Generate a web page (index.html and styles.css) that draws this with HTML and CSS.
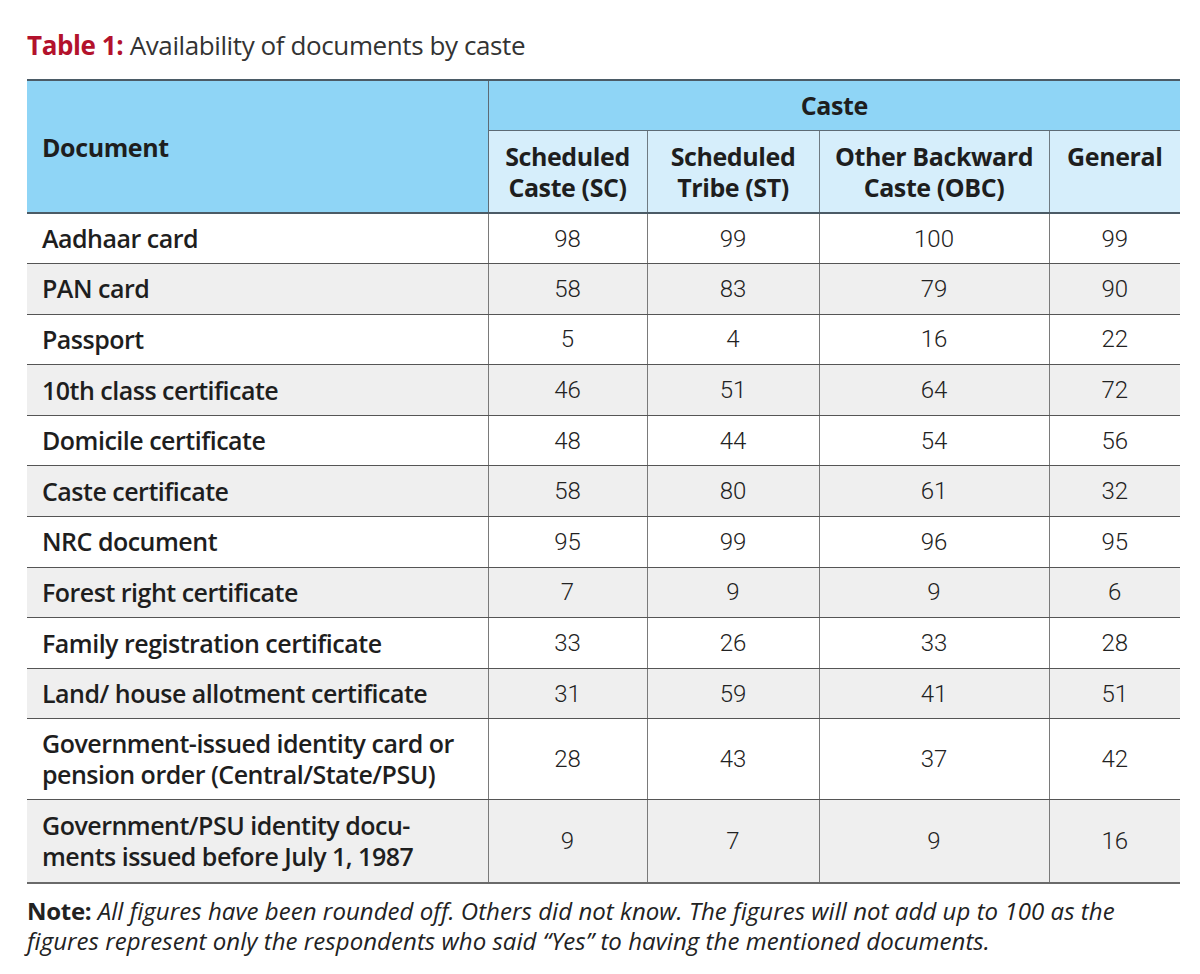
FILE: index.html
```html
<!DOCTYPE html>
<html lang="en">
<head>
<meta charset="utf-8">
<title>Table 1: Availability of documents by caste</title>
<link rel="stylesheet" href="styles.css">
</head>
<body>
<div class="page">
  <h1 class="title"><span class="title-label">Table 1:</span> Availability of documents by caste</h1>
  <table class="data">
    <colgroup>
      <col class="c-doc">
      <col class="c-sc">
      <col class="c-st">
      <col class="c-obc">
      <col class="c-gen">
    </colgroup>
    <thead>
      <tr class="h1">
        <th rowspan="2" class="doc-head">Document</th>
        <th colspan="4" class="group-head">Caste</th>
      </tr>
      <tr class="h2">
        <th>Scheduled<br>Caste (SC)</th>
        <th>Scheduled<br>Tribe (ST)</th>
        <th>Other Backward<br>Caste (OBC)</th>
        <th>General</th>
      </tr>
    </thead>
    <tbody>
      <tr><td class="lbl">Aadhaar card</td><td>98</td><td>99</td><td>100</td><td>99</td></tr>
      <tr><td class="lbl">PAN card</td><td>58</td><td>83</td><td>79</td><td>90</td></tr>
      <tr><td class="lbl">Passport</td><td>5</td><td>4</td><td>16</td><td>22</td></tr>
      <tr><td class="lbl">10th class certificate</td><td>46</td><td>51</td><td>64</td><td>72</td></tr>
      <tr><td class="lbl">Domicile certificate</td><td>48</td><td>44</td><td>54</td><td>56</td></tr>
      <tr><td class="lbl">Caste certificate</td><td>58</td><td>80</td><td>61</td><td>32</td></tr>
      <tr><td class="lbl">NRC document</td><td>95</td><td>99</td><td>96</td><td>95</td></tr>
      <tr><td class="lbl">Forest right certificate</td><td>7</td><td>9</td><td>9</td><td>6</td></tr>
      <tr><td class="lbl">Family registration certificate</td><td>33</td><td>26</td><td>33</td><td>28</td></tr>
      <tr><td class="lbl">Land/ house allotment certificate</td><td>31</td><td>59</td><td>41</td><td>51</td></tr>
      <tr class="tall"><td class="lbl">Government-issued identity card or<br>pension order (Central/State/PSU)</td><td>28</td><td>43</td><td>37</td><td>42</td></tr>
      <tr class="tall"><td class="lbl">Government/PSU identity docu-<br>ments issued before July 1, 1987</td><td>9</td><td>7</td><td>9</td><td>16</td></tr>
    </tbody>
  </table>
  <p class="note"><strong>Note:</strong> <em>All figures have been rounded off. Others did not know. The figures will not add up to 100 as the<br>figures represent only the respondents who said “Yes” to having the mentioned documents.</em></p>
</div>
</body>
</html>
```
FILE: styles.css
```css
html, body {
  margin: 0;
  padding: 0;
  background: #ffffff;
}

body {
  font-family: "Open Sans", "Noto Sans", "Liberation Sans", sans-serif;
  color: #222222;
}

.page {
  padding: 28px 10px 0 27px;
}

.title {
  margin: 0 0 17px 0;
  font-size: 26px;
  line-height: 34px;
  font-weight: 400;
  color: #333333;
  letter-spacing: -0.4px;
}

.title-label {
  color: #b3122c;
  font-weight: 700;
}

.data {
  width: 1153px;
  border-collapse: collapse;
  table-layout: fixed;
}

.c-doc { width: 461px; }
.c-sc { width: 159px; }
.c-st { width: 172px; }
.c-obc { width: 230px; }
.c-gen { width: 131px; }

.data th {
  font-weight: 700;
  font-size: 25px;
  letter-spacing: -0.4px;
  color: #1e1e1e;
  box-sizing: border-box;
}

.h1 th {
  background: #8fd5f6;
  border-top: 2px solid #4b5b66;
  height: 50px;
  padding: 0;
}

.doc-head {
  text-align: left;
  padding-left: 15px !important;
  border-right: 1px solid #5d6b75;
  border-bottom: 2px solid #4b5b66;
  vertical-align: middle;
}

.group-head {
  text-align: center;
  border-bottom: 1px solid #5d6b75;
}

.h2 th {
  background: #d6eefb;
  height: 83px;
  vertical-align: top;
  padding: 10px 0 0 0;
  line-height: 31px;
  text-align: center;
  border-right: 1px solid #6f7a82;
  border-bottom: 2px solid #4b5b66;
}

.h2 th:last-child {
  border-right: none;
}

.data td {
  box-sizing: border-box;
  height: 50.6px;
  padding: 0;
  text-align: center;
  vertical-align: middle;
  font-family: "Roboto", "Liberation Sans", sans-serif;
  font-weight: 300;
  font-size: 24px;
  color: #222222;
  border-bottom: 1px solid #555555;
  border-right: 1px solid #7a7a7a;
}

.data td:last-child {
  border-right: none;
}

.data td.lbl {
  text-align: left;
  padding-left: 15px;
  font-family: "Open Sans", "Noto Sans", "Liberation Sans", sans-serif;
  font-weight: 600;
  font-size: 25px;
  letter-spacing: -0.5px;
  line-height: 31px;
  color: #1e1e1e;
}

.data tbody tr:nth-child(even) td {
  background: #efefef;
}

.data tr.tall td {
  height: 81px;
}

.data tbody tr:last-child td {
  height: 83px;
  border-bottom: 2px solid #6a6a6a;
}

.note {
  margin: 12px 0 0 0;
  font-size: 24px;
  line-height: 30px;
  color: #222222;
  letter-spacing: 0.05px;
  white-space: nowrap;
}

.note strong {
  font-weight: 700;
  letter-spacing: -0.3px;
}

.note em {
  font-style: italic;
}
```
